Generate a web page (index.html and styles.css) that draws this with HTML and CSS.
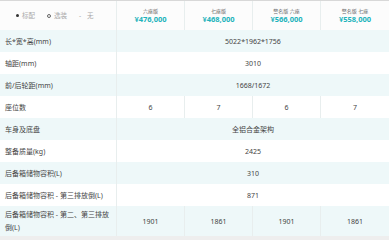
FILE: index.html
```html
<!DOCTYPE html>
<html lang="zh">
<head>
<meta charset="utf-8">
<link rel="stylesheet" href="styles.css">
</head>
<body>
<div class="table">
  <div class="row head">
    <div class="cell legend">
      <span class="dot solid"></span><span>标配</span>
      <span class="dot ring"></span><span>选装</span>
      <span class="dash">-</span><span>无</span>
    </div>
    <div class="cell hcell"><div class="ver">六座版</div><div class="price">¥476,000</div></div>
    <div class="cell hcell"><div class="ver">七座版</div><div class="price">¥468,000</div></div>
    <div class="cell hcell"><div class="ver">警名版 六座</div><div class="price">¥566,000</div></div>
    <div class="cell hcell"><div class="ver">警名版 七座</div><div class="price">¥558,000</div></div>
  </div>
  <div class="row alt"><div class="cell label">长*宽*高(mm)</div><div class="cell val span">5022*1962*1756</div></div>
  <div class="row"><div class="cell label">轴距(mm)</div><div class="cell val span">3010</div></div>
  <div class="row alt"><div class="cell label">前/后轮距(mm)</div><div class="cell val span">1668/1672</div></div>
  <div class="row"><div class="cell label">座位数</div><div class="cell val">6</div><div class="cell val">7</div><div class="cell val">6</div><div class="cell val">7</div></div>
  <div class="row alt"><div class="cell label">车身及底盘</div><div class="cell val span">全铝合金架构</div></div>
  <div class="row"><div class="cell label">整备质量(kg)</div><div class="cell val span">2425</div></div>
  <div class="row alt"><div class="cell label">后备箱储物容积(L)</div><div class="cell val span">310</div></div>
  <div class="row"><div class="cell label">后备箱储物容积 - 第三排放倒(L)</div><div class="cell val span">871</div></div>
  <div class="row alt"><div class="cell label">后备箱储物容积 - 第二、第三排放倒(L)</div><div class="cell val">1901</div><div class="cell val">1861</div><div class="cell val">1901</div><div class="cell val">1861</div></div>
</div>
<div class="foot"></div>
</body>
</html>
```
FILE: styles.css
```css
html, body {
  margin: 0;
  padding: 0;
  background: #ffffff;
}
body {
  font-family: "Noto Sans", "Noto Sans CJK SC", sans-serif;
  color: #444;
  width: 389px;
  height: 240px;
  overflow: hidden;
}
.table {
  display: flex;
  flex-direction: column;
  border-top: 1px solid #d8d8d8;
}
.row {
  display: grid;
  grid-template-columns: 117px repeat(4, 68px);
  min-height: 22px;
  background: #ffffff;
}
.row.alt {
  background: #eef8f9;
}
.row.head {
  height: 29px;
  background: #fcfcfc;
}
.cell {
  border-right: 1px solid #e8eeee;
  display: flex;
  align-items: center;
  font-size: 7px;
  line-height: 13px;
  box-sizing: border-box;
}
.cell:last-child {
  border-right: none;
}
.label {
  padding: 2px 1px 2px 5px;
  color: #444;
}
.val {
  justify-content: center;
  color: #444;
}
.val.span {
  grid-column: 2 / span 4;
}
.legend {
  padding-left: 16px;
  color: #aaa;
  font-size: 6.5px;
  gap: 2px;
}
.dot {
  width: 3px;
  height: 3px;
  border-radius: 50%;
  box-sizing: border-box;
  display: inline-block;
}
.dot.solid {
  background: #333;
  margin-right: 1px;
}
.dot.ring {
  width: 4px;
  height: 4px;
  border: 1px solid #666;
  margin-left: 10px;
  margin-right: 1px;
}
.dash {
  margin-left: 10px;
  margin-right: 4px;
}
.hcell {
  flex-direction: column;
  justify-content: center;
  padding-top: 1px;
}
.ver {
  font-size: 5px;
  line-height: 6px;
  color: #666;
}
.price {
  font-size: 7.5px;
  line-height: 10px;
  font-weight: 700;
  color: #22b3bb;
}
.foot {
  height: 10px;
  background: #eeeeee;
}
```
